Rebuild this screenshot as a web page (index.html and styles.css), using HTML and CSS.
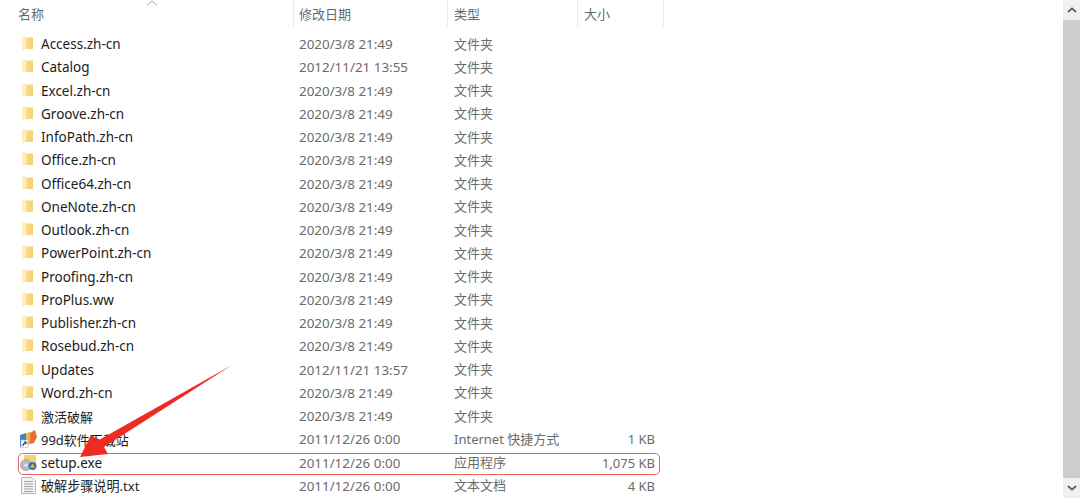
FILE: index.html
```html
<!DOCTYPE html>
<html lang="zh-CN">
<head>
    <meta charset="UTF-8">
    <title>setup</title>
    <link rel="stylesheet" href="styles.css">
</head>
<body>
    <svg width="0" height="0" class="defs">
        <defs>
            <linearGradient id="folderBack" x1="0" y1="0" x2="1" y2="0">
                <stop offset="0" stop-color="#fbe3a0"/>
                <stop offset="1" stop-color="#f6d071"/>
            </linearGradient>
            <symbol id="folder" viewBox="0 0 20 20">
                <path d="M4 3 L7 2 L7.5 3.5 L15 3.5 L15 15 L4 15 Z" fill="url(#folderBack)"/>
                <path d="M4 3 L8 2.5 L8 14.5 L4 16.5 Z" fill="#fdeec4"/>
            </symbol>
        </defs>
    </svg>
    <div class="window">
        <div class="list">
            <div class="header">
                <div class="col col-name">名称<span class="sort"><svg width="12" height="6" viewBox="0 0 12 6"><path d="M1 5.5 L6 1 L11 5.5" fill="none" stroke="#a8a8a8" stroke-width="1"/></svg></span></div>
                <div class="col col-date">修改日期</div>
                <div class="col col-type">类型</div>
                <div class="col col-size">大小</div>
            </div>
            <div class="rows">
                <div class="row"><svg class="icon"><use href="#folder"/></svg><span class="name">Access.zh-cn</span><span class="date">2020/3/8 21:49</span><span class="type">文件夹</span><span class="size"></span></div>
                <div class="row"><svg class="icon"><use href="#folder"/></svg><span class="name">Catalog</span><span class="date">2012/11/21 13:55</span><span class="type">文件夹</span><span class="size"></span></div>
                <div class="row"><svg class="icon"><use href="#folder"/></svg><span class="name">Excel.zh-cn</span><span class="date">2020/3/8 21:49</span><span class="type">文件夹</span><span class="size"></span></div>
                <div class="row"><svg class="icon"><use href="#folder"/></svg><span class="name">Groove.zh-cn</span><span class="date">2020/3/8 21:49</span><span class="type">文件夹</span><span class="size"></span></div>
                <div class="row"><svg class="icon"><use href="#folder"/></svg><span class="name">InfoPath.zh-cn</span><span class="date">2020/3/8 21:49</span><span class="type">文件夹</span><span class="size"></span></div>
                <div class="row"><svg class="icon"><use href="#folder"/></svg><span class="name">Office.zh-cn</span><span class="date">2020/3/8 21:49</span><span class="type">文件夹</span><span class="size"></span></div>
                <div class="row"><svg class="icon"><use href="#folder"/></svg><span class="name">Office64.zh-cn</span><span class="date">2020/3/8 21:49</span><span class="type">文件夹</span><span class="size"></span></div>
                <div class="row"><svg class="icon"><use href="#folder"/></svg><span class="name">OneNote.zh-cn</span><span class="date">2020/3/8 21:49</span><span class="type">文件夹</span><span class="size"></span></div>
                <div class="row"><svg class="icon"><use href="#folder"/></svg><span class="name">Outlook.zh-cn</span><span class="date">2020/3/8 21:49</span><span class="type">文件夹</span><span class="size"></span></div>
                <div class="row"><svg class="icon"><use href="#folder"/></svg><span class="name">PowerPoint.zh-cn</span><span class="date">2020/3/8 21:49</span><span class="type">文件夹</span><span class="size"></span></div>
                <div class="row"><svg class="icon"><use href="#folder"/></svg><span class="name">Proofing.zh-cn</span><span class="date">2020/3/8 21:49</span><span class="type">文件夹</span><span class="size"></span></div>
                <div class="row"><svg class="icon"><use href="#folder"/></svg><span class="name">ProPlus.ww</span><span class="date">2020/3/8 21:49</span><span class="type">文件夹</span><span class="size"></span></div>
                <div class="row"><svg class="icon"><use href="#folder"/></svg><span class="name">Publisher.zh-cn</span><span class="date">2020/3/8 21:49</span><span class="type">文件夹</span><span class="size"></span></div>
                <div class="row"><svg class="icon"><use href="#folder"/></svg><span class="name">Rosebud.zh-cn</span><span class="date">2020/3/8 21:49</span><span class="type">文件夹</span><span class="size"></span></div>
                <div class="row"><svg class="icon"><use href="#folder"/></svg><span class="name">Updates</span><span class="date">2012/11/21 13:57</span><span class="type">文件夹</span><span class="size"></span></div>
                <div class="row"><svg class="icon"><use href="#folder"/></svg><span class="name">Word.zh-cn</span><span class="date">2020/3/8 21:49</span><span class="type">文件夹</span><span class="size"></span></div>
                <div class="row"><svg class="icon"><use href="#folder"/></svg><span class="name name-cjk">激活破解</span><span class="date">2020/3/8 21:49</span><span class="type">文件夹</span><span class="size"></span></div>
                <div class="row">
                    <svg class="icon" viewBox="0 0 20 20">
                        <path d="M2 6 L8 4 L8 17 L2 18 Z" fill="#4a7fc0"/>
                        <path d="M8 5 L12 2 L12 15 L8 17 Z" fill="#e9b93f"/>
                        <path d="M12 4 L17 1 L19 8 L16 14 L12 15 Z" fill="#e4713a"/>
                        <rect x="3" y="11" width="7" height="7.5" fill="#fff" stroke="#a8b4c4" stroke-width=".6"/>
                        <path d="M5 17 Q5 13.8 8 13.8 M6.4 12.4 L8.4 13.8 L6.6 15.2" fill="none" stroke="#1c5fc0" stroke-width="1.3"/>
                    </svg>
                    <span class="name name-cjk">99d软件下载站</span><span class="date">2011/12/26 0:00</span><span class="type">Internet 快捷方式</span><span class="size">1 KB</span>
                </div>
                <div class="row row-marked">
                    <svg class="icon" viewBox="0 0 20 20">
                        <path d="M6 2 L18 2 L18 13 L6 13 Z" fill="#f3d274"/>
                        <circle cx="8" cy="12" r="5.5" fill="#b8bcbe" stroke="#85898d" stroke-width=".6"/>
                        <circle cx="8" cy="12" r="1.6" fill="#eef0f0"/>
                        <circle cx="14.5" cy="13" r="4" fill="#3d72b4"/>
                        <path d="M14.5 10.5 L16.7 14.4 L12.3 14.4 Z" fill="#f0c23c"/>
                    </svg>
                    <span class="name">setup.exe</span><span class="date">2011/12/26 0:00</span><span class="type">应用程序</span><span class="size">1,075 KB</span>
                </div>
                <div class="row">
                    <svg class="icon" viewBox="0 0 20 20">
                        <path d="M3.5 1.5 L14 1.5 L17.5 5 L17.5 17.5 L3.5 17.5 Z" fill="#f4f4f4" stroke="#b4b4b4"/>
                        <path d="M6 5.5 H15 M6 8 H15 M6 10.5 H15 M6 13 H15 M6 15.5 H15" stroke="#a4a4a4"/>
                    </svg>
                    <span class="name name-mix">破解步骤说明.txt</span><span class="date">2011/12/26 0:00</span><span class="type">文本文档</span><span class="size">4 KB</span>
                </div>
            </div>
        </div>
        <div class="scrollbar">
            <div class="arrow"><svg width="10" height="6" viewBox="0 0 10 6"><path d="M1 5 L5 1.4 L9 5" fill="none" stroke="#5c5c5c" stroke-width="1.8"/></svg></div>
            <div class="thumb"></div>
            <div class="arrow"><svg width="10" height="6" viewBox="0 0 10 6"><path d="M1 1 L5 4.6 L9 1" fill="none" stroke="#5c5c5c" stroke-width="1.8"/></svg></div>
        </div>
    </div>
    <svg class="pointer" width="1080" height="498" viewBox="0 0 1080 498">
        <path d="M232 365 L99 440 L91 435 L80 457 L108 454 L104 447 Z" fill="#ee2a22"/>
    </svg>
</body>
</html>
```

FILE: styles.css
```css
body {
    margin: 0;
    background: #fff;
    font-family: "Noto Sans", "Noto Sans CJK SC", sans-serif;
    font-size: 13px;
    overflow: hidden;
}
.defs {
    position: absolute;
}
.window {
    display: flex;
    height: 498px;
}
.list {
    flex: 1;
    min-width: 0;
}
.header {
    display: flex;
    height: 27px;
    margin-bottom: 5.4px;
    color: #5f6b7a;
}
.col {
    box-sizing: border-box;
    padding: 4px 0 0 6px;
    border-right: 1px solid #e9e9e9;
    position: relative;
}
.col-name {
    width: 294px;
    padding-left: 18px;
}
.col-date {
    width: 154px;
    padding-left: 5px;
}
.col-type {
    width: 130px;
}
.col-size {
    width: 86px;
}
.sort {
    position: absolute;
    left: 146px;
    top: 0;
    line-height: 0;
}
.row {
    display: flex;
    align-items: center;
    height: 23.25px;
    color: #6b6b6b;
    position: relative;
}
.icon {
    width: 20px;
    height: 20px;
    margin: 0 3px 0 18px;
    flex: none;
}
.name {
    width: 258px;
    color: #1c1c1c;
    font-size: 13.5px;
    white-space: nowrap;
}
.name-cjk {
    font-size: 13px;
}
.name-mix {
    font-size: 13.1px;
}
.date {
    width: 155px;
    font-size: 13.4px;
}
.type {
    width: 120px;
    padding-bottom: 2px;
}
.size {
    width: 81px;
    text-align: right;
}
.row-marked::after {
    content: "";
    position: absolute;
    left: 18px;
    top: 2px;
    width: 640px;
    height: 20px;
    border: 1px solid #f0605a;
    border-radius: 5px;
}
.scrollbar {
    width: 17px;
    display: flex;
    flex-direction: column;
    background: #f0f0f0;
}
.arrow {
    height: 20px;
    display: flex;
    align-items: center;
    justify-content: center;
    flex: none;
}
.thumb {
    flex: 1;
    background: #cdcdcd;
}
.pointer {
    position: absolute;
    left: 0;
    top: 0;
}
```
